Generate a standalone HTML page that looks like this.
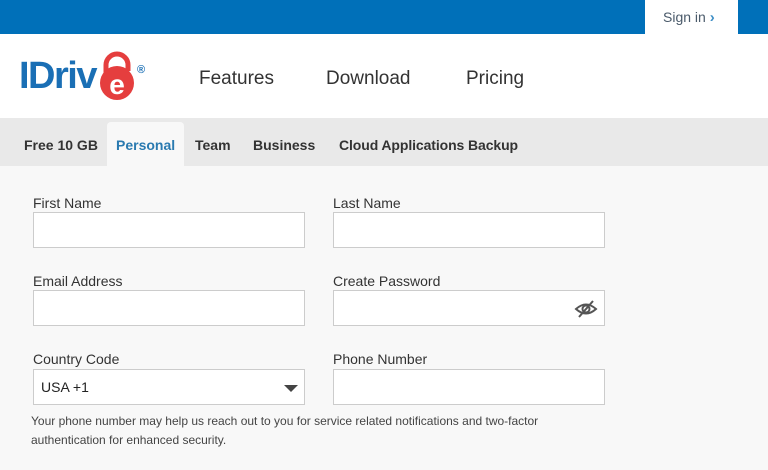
<!DOCTYPE html>
<html><head><style>
*{margin:0;padding:0;box-sizing:border-box}
body{width:768px;height:470px;overflow:hidden;background:#f8f8f8;font-family:"Liberation Sans",Arial,sans-serif;position:relative}
.top{position:absolute;left:0;top:0;width:768px;height:34px;background:#0070b9}
.sign{position:absolute;left:645px;top:0;width:93px;height:34px;background:#fff;color:#4a5a6a;font-size:14px;line-height:34px;padding-left:18px}
.sign b{color:#3f8fc6;font-weight:bold;font-size:15px}
.hdr{position:absolute;left:0;top:34px;width:768px;height:84px;background:#fff}
.logo{position:absolute;left:19px;top:54px;font-size:38px;font-weight:bold;color:#1a6fb5;letter-spacing:-1.5px;line-height:44px}
.nav{position:absolute;top:68px;font-size:19px;color:#333}
.tabs{position:absolute;left:0;top:118px;width:768px;height:48px;background:#e9e9e9}
.tab{position:absolute;top:137px;font-size:14px;font-weight:bold;color:#333}
.ptab{position:absolute;left:107px;top:122px;width:77px;height:44px;background:#f8f8f8;border-radius:4px 4px 0 0}
.lbl{position:absolute;font-size:14px;color:#333}
.inp{position:absolute;width:272px;height:36px;background:#fff;border:1px solid #ccc}
.note{position:absolute;left:31px;top:412px;font-size:12px;color:#444;line-height:19px;width:510px}
</style></head><body>
<div class="top"></div>
<div class="sign">Sign in <b>›</b></div>
<div class="hdr"></div>
<div class="logo">IDriv</div>
<svg style="position:absolute;left:97px;top:51px" width="42" height="50" viewBox="0 0 42 50">
<path d="M9 22 V14 a11 11 0 0 1 22 0 V20" fill="none" stroke="#e53e3e" stroke-width="5"/>
<circle cx="20" cy="32" r="17" fill="#e53e3e"/>
<text x="20" y="43" font-size="28" font-weight="bold" fill="#fff" text-anchor="middle" font-family="Liberation Sans">e</text>
</svg>
<div style="position:absolute;left:137px;top:64px;font-size:11px;color:#1a6fb5;font-weight:bold">®</div>
<div class="nav" style="left:199px">Features</div>
<div class="nav" style="left:326px">Download</div>
<div class="nav" style="left:466px">Pricing</div>
<div class="tabs"></div>
<div class="ptab"></div>
<div class="tab" style="left:24px">Free 10 GB</div>
<div class="tab" style="left:116px;color:#2a7ab0">Personal</div>
<div class="tab" style="left:195px">Team</div>
<div class="tab" style="left:253px">Business</div>
<div class="tab" style="left:339px;letter-spacing:-0.1px">Cloud Applications Backup</div>
<div class="lbl" style="left:33px;top:195px">First Name</div>
<div class="lbl" style="left:333px;top:195px">Last Name</div>
<div class="inp" style="left:33px;top:212px"></div>
<div class="inp" style="left:333px;top:212px"></div>
<div class="lbl" style="left:33px;top:273px">Email Address</div>
<div class="lbl" style="left:333px;top:273px">Create Password</div>
<div class="inp" style="left:33px;top:290px"></div>
<div class="inp" style="left:333px;top:290px"></div>
<svg style="position:absolute;left:574px;top:298px" width="24" height="22" viewBox="0 0 24 22">
<path d="M2 11 Q12 2 22 11 Q12 20 2 11Z" fill="none" stroke="#555" stroke-width="2"/>
<circle cx="12" cy="11" r="3.5" fill="none" stroke="#555" stroke-width="2"/>
<path d="M19 3 L5 19" stroke="#555" stroke-width="2"/>
</svg>
<div class="lbl" style="left:33px;top:351px">Country Code</div>
<div class="lbl" style="left:333px;top:351px">Phone Number</div>
<div class="inp" style="left:33px;top:369px"></div>
<div style="position:absolute;left:41px;top:379px;font-size:14px;color:#222">USA +1</div>
<div style="position:absolute;left:284px;top:385px;width:0;height:0;border-left:7px solid transparent;border-right:7px solid transparent;border-top:7px solid #444"></div>
<div class="inp" style="left:333px;top:369px"></div>
<div class="note">Your phone number may help us reach out to you for service related notifications and two-factor authentication for enhanced security.</div>
</body></html>
